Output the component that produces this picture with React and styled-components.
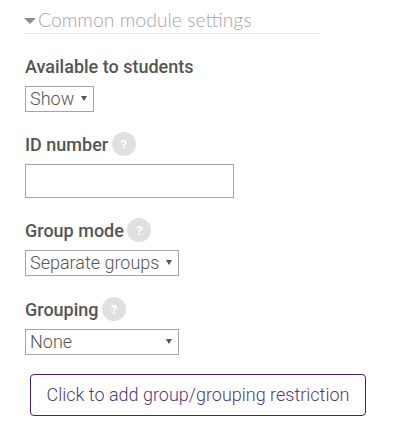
import React from "react";
import styled, { createGlobalStyle } from "styled-components";

const Global = createGlobalStyle`
  html, body { margin: 0; padding: 0; background: #fff; }
  body { font-family: Roboto, "Liberation Sans", sans-serif; color: #555; }
`;

const Page = styled.div`
  width: 414px;
  height: 429px;
  overflow: hidden;
  box-sizing: border-box;
  padding: 8px 0 0 25px;
  display: flex;
  flex-direction: column;
  align-items: flex-start;
`;

const SectionHeader = styled.div`
  width: 294px;
  height: 25px;
  box-sizing: content-box;
  border-bottom: 1px solid #e5e5e5;
  display: flex;
  align-items: center;
  gap: 2px;
`;

const Caret = styled.span`
  width: 0;
  height: 0;
  margin-left: -1px;
  margin-top: 1px;
  border-left: 6px solid transparent;
  border-right: 6px solid transparent;
  border-top: 6px solid #8f8f8f;
`;

const SectionTitle = styled.h3`
  margin: -2px 0 0;
  font-family: Lato, sans-serif;
  font-weight: 300;
  font-size: 19.4px;
  line-height: 25px;
  color: #a3a6aa;
  white-space: nowrap;
`;

const Label = styled.div`
  display: flex;
  align-items: center;
  gap: 3.5px;
  height: 24px;
  margin-top: ${(p) => p.$top}px;
  font-size: 18px;
  font-weight: 500;
  color: #555;
`;

const Help = styled.span`
  width: 24px;
  height: 24px;
  border-radius: 50%;
  background: #e0e0e0;
  color: #fff;
  display: flex;
  align-items: center;
  justify-content: center;
  font-size: 13px;
  font-weight: 700;
`;

const SelectBox = styled.div`
  position: relative;
  width: ${(p) => p.$width}px;
  height: 26px;
  margin-top: ${(p) => p.$top}px;
`;

const Select = styled.select`
  appearance: none;
  width: 100%;
  height: 100%;
  box-sizing: border-box;
  margin: 0;
  padding: 0 0 2px 4px;
  border: 1px solid #a6a6a6;
  border-radius: 0;
  background: #fff;
  font-family: Roboto, sans-serif;
  font-weight: 300;
  font-size: 18px;
  color: #555;
`;

const Arrow = styled.span`
  position: absolute;
  right: 7px;
  top: 10px;
  width: 0;
  height: 0;
  border-left: 3px solid transparent;
  border-right: 3px solid transparent;
  border-top: 5px solid #555;
  pointer-events: none;
`;

const TextInput = styled.input`
  display: block;
  width: 209px;
  height: 34px;
  box-sizing: border-box;
  margin: 8px 0 0;
  padding: 0 6px;
  border: 1px solid #a6a6a6;
  border-radius: 0;
  background: #fff;
`;

const RestrictionButton = styled.button`
  width: 336px;
  height: 42px;
  box-sizing: border-box;
  margin: 19px 0 0 5px;
  padding: 0 0 2px;
  background: #fff;
  border: 1px solid #4b1c8c;
  border-radius: 4px;
  font-family: Roboto, sans-serif;
  font-weight: 300;
  font-size: 18px;
  color: #4f3a78;
`;

function Dropdown({ width, top, value }) {
  return (
    <SelectBox $width={width} $top={top}>
      <Select defaultValue={value}>
        <option>{value}</option>
      </Select>
      <Arrow />
    </SelectBox>
  );
}

export default function App() {
  return (
    <Page>
      <Global />
      <SectionHeader>
        <Caret />
        <SectionTitle>Common module settings</SectionTitle>
      </SectionHeader>
      <Label $top={20}>Available to students</Label>
      <Dropdown width={69} top={8} value="Show" />
      <Label $top={20}>
        ID number
        <Help>?</Help>
      </Label>
      <TextInput type="text" />
      <Label $top={20}>
        Group mode
        <Help>?</Help>
      </Label>
      <Dropdown width={154} top={8} value="Separate groups" />
      <Label $top={21}>
        Grouping
        <Help>?</Help>
      </Label>
      <Dropdown width={154} top={8} value="None" />
      <RestrictionButton type="button">Click to add group/grouping restriction</RestrictionButton>
    </Page>
  );
}
